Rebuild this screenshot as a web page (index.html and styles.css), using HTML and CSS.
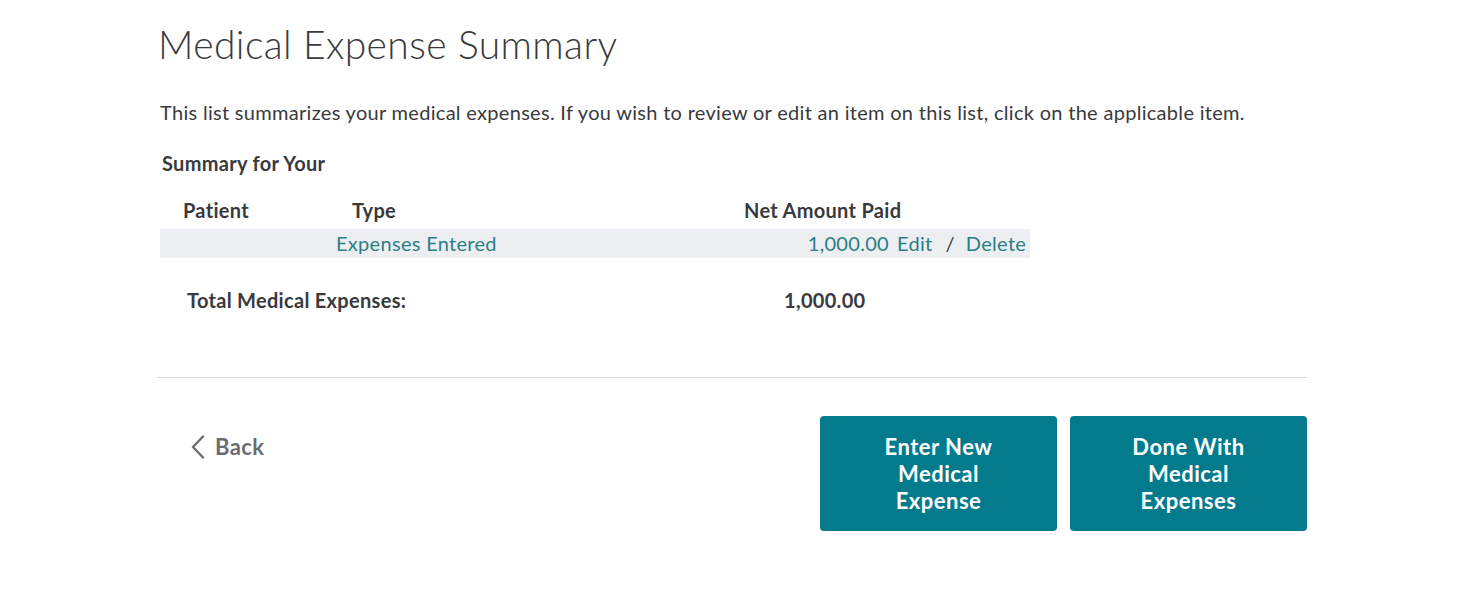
FILE: index.html
```html
<!DOCTYPE html>
<html>
<head>
<meta charset="utf-8">
<link rel="stylesheet" href="styles.css">
</head>
<body>
<div class="page">
  <h1 class="title">Medical Expense Summary</h1>
  <p class="intro">This list summarizes your medical expenses. If you wish to review or edit an item on this list, click on the applicable item.</p>
  <div class="summary-label">Summary for Your</div>
  <table class="summary">
    <thead>
      <tr>
        <th class="c-patient">Patient</th>
        <th class="c-type">Type</th>
        <th class="c-amount">Net Amount Paid</th>
        <th class="c-actions"></th>
      </tr>
    </thead>
    <tbody>
      <tr class="item">
        <td class="c-patient"></td>
        <td class="c-type"><a class="link">Expenses Entered</a></td>
        <td class="c-amount"><a class="link">1,000.00</a></td>
        <td class="c-actions"><a class="link">Edit</a><span class="sep">/</span><a class="link">Delete</a></td>
      </tr>
    </tbody>
  </table>
  <div class="total">
    <span class="total-label">Total Medical Expenses:</span>
    <span class="total-value">1,000.00</span>
  </div>
  <hr class="divider">
  <div class="footer">
    <a class="back">
      <svg class="chev" width="16" height="24" viewBox="0 0 16 24"><path d="M13 1.5 L3 12 L13 22.5" fill="none" stroke="#6b6c72" stroke-width="2.4" stroke-linecap="round" stroke-linejoin="round"/></svg>
      <span>Back</span>
    </a>
    <div class="buttons">
      <button class="btn">Enter New Medical Expense</button>
      <button class="btn">Done With Medical Expenses</button>
    </div>
  </div>
</div>
</body>
</html>
```
FILE: styles.css
```css
html, body {
  margin: 0;
  padding: 0;
  background: #fff;
}
body {
  font-family: Lato, "Open Sans", sans-serif;
  color: #393a3d;
}
.page {
  width: 1150px;
  margin-left: 157px;
  padding-top: 21px;
}
.title {
  margin: 0 0 0 1px;
  font-weight: 300;
  font-size: 39px;
  line-height: 46px;
  letter-spacing: 0.4px;
  color: #393a3d;
}
.intro {
  margin: 33px 0 0 3px;
  font-size: 20px;
  line-height: 24px;
  letter-spacing: 0.3px;
  font-weight: 400;
  color: #393a3d;
}
.summary-label {
  margin: 27px 0 0 5px;
  font-size: 20px;
  font-weight: 700;
  letter-spacing: 0.3px;
  line-height: 24px;
}
.summary {
  border-collapse: collapse;
  table-layout: fixed;
  margin: 23px 0 0 3px;
  width: 870px;
  font-size: 20px;
  letter-spacing: 0.3px;
}
.summary th {
  font-weight: 700;
  text-align: left;
  height: 31px;
  padding: 0;
  vertical-align: top;
  line-height: 24px;
  white-space: nowrap;
  overflow: visible;
}
.summary td {
  height: 29px;
  padding: 0;
  line-height: 29px;
  white-space: nowrap;
}
.item {
  background: #eceef1;
}
.summary .c-patient { width: 176px; padding-left: 23px; box-sizing: border-box; }
.summary .c-type { width: 408px; box-sizing: border-box; }
.summary th.c-type { padding-left: 16px; }
.summary td.c-type { padding-left: 0; }
.summary .c-amount { width: 145px; text-align: right; }
.summary th.c-amount { text-align: left; padding-left: 0; }
.summary .c-actions { width: 141px; text-align: left; padding-left: 8px; box-sizing: border-box; }
.link {
  color: #2b7f85;
  cursor: pointer;
}
.sep {
  color: #393a3d;
  margin: 0 11px 0 13px;
}
.total {
  display: flex;
  margin: 30px 0 0 30px;
  font-size: 20px;
  font-weight: 700;
  letter-spacing: 0.3px;
  line-height: 24px;
}
.total-label { width: 597px; }
.divider {
  margin: 65px 0 0 0;
  border: 0;
  border-top: 1px solid #d4d7dc;
}
.footer {
  display: flex;
  justify-content: space-between;
  align-items: flex-start;
  margin-top: 38px;
}
.back {
  display: flex;
  align-items: center;
  gap: 9px;
  margin: 17px 0 0 33px;
  font-size: 22px;
  font-weight: 700;
  letter-spacing: 0.4px;
  color: #6b6c72;
  cursor: pointer;
}
.buttons {
  display: flex;
  gap: 13px;
}
.btn {
  width: 237px;
  height: 115px;
  border: 0;
  border-radius: 4px;
  background: #037b8d;
  color: #fff;
  font-family: Lato, "Open Sans", sans-serif;
  font-size: 22px;
  font-weight: 700;
  letter-spacing: 0.5px;
  line-height: 27px;
  padding: 0 36px;
}
```
